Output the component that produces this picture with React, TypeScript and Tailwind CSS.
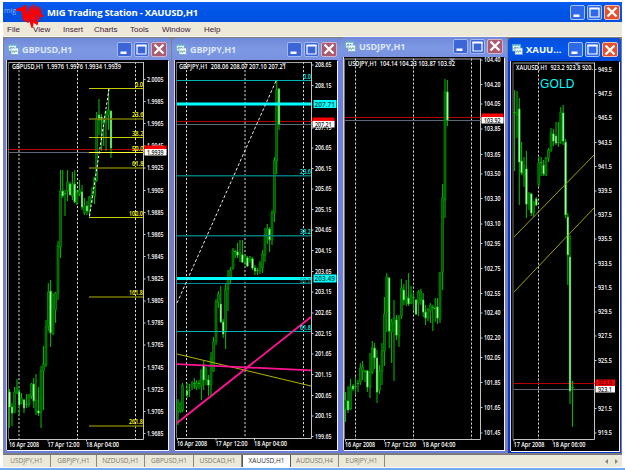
import clsx from "clsx";

// x, high, low, body top, body bottom, kind (u: up, d: down, n: no body)
type Candle = [number, number, number, number, number, "u" | "d" | "n"];
type Line = {
  from: [number, number];
  to: [number, number];
  color: string;
  width?: number;
  dash?: string;
};
type Label = { text: string; x: number; y: number; w: number; color?: string };

type Chart = {
  symbol: string;
  title: string;
  view: [number, number, number, number];
  plot: [number, number, number, number];
  grid: number[];
  header: Label;
  marker: number;
  scale: [string, number][];
  dates: [string, number, number][];
  candles: Candle[];
  lines: Line[];
  labels: Label[];
  ask: number;
  bid: number;
  askText?: string;
  bidText: string;
  tags?: [string, number][];
};

const YELLOW = "#c8c800";
const OLIVE = "#777700";
const TEAL = "#008c8c";
const AQUA = "#00f0f0";

const gbpusd: Chart = {
  symbol: "GBPUSD,H1",
  title: "GBPUSD,H1",
  view: [7, 60, 161, 390],
  plot: [9, 62, 143.5, 439.5],
  grid: [19, 77.5, 135.5],
  header: { text: "GBPUSD,H1  1.9976 1.9976 1.9934 1.9939", x: 12, y: 69, w: 109 },
  marker: 116,
  scale: [
    ["2.0005", 79], ["1.9985", 101], ["1.9965", 123], ["1.9945", 145.5],
    ["1.9925", 167.5], ["1.9905", 190], ["1.9885", 212], ["1.9865", 234],
    ["1.9845", 256], ["1.9825", 278.5], ["1.9805", 300.5], ["1.9785", 322.5],
    ["1.9765", 344.5], ["1.9745", 367], ["1.9725", 389], ["1.9705", 411],
    ["1.9685", 433],
  ],
  dates: [["16 Apr 2008", 9, 30], ["17 Apr 12:00", 47.5, 32], ["18 Apr 04:00", 86, 33]],
  candles: [
    [9.5, 389, 428, 392, 407, "d"], [12, 403, 426, 407, 413, "d"],
    [14.5, 387, 413, 392, 412, "u"], [17, 379, 394, 388, 393, "u"],
    [19.2, 389, 415, 392, 405, "d"], [21.5, 393, 404, 398, 403, "u"],
    [24, 399, 413, 400, 408, "d"], [26.5, 394, 408, 404, 406, "n"],
    [29, 394, 407, 395, 404, "u"], [31.5, 383, 399, 384, 396, "u"],
    [33.7, 378, 408, 384, 401, "d"], [36, 374, 415, 400, 411, "u"],
    [38.5, 387, 416, 411, 413, "d"], [41, 366, 428, 371, 412, "u"],
    [43.5, 346, 410, 364, 371, "u"], [46, 320, 367, 327, 365, "u"],
    [48.3, 283, 331, 292, 326, "u"], [50.6, 280, 347, 291, 333, "d"],
    [53, 293, 335, 295, 334, "u"], [55.5, 292, 323, 293, 310, "u"],
    [58, 241, 300, 246, 293, "u"], [60.5, 170, 258, 191, 247, "u"],
    [62.7, 170, 198, 191, 196, "d"], [65, 190, 216, 193, 195, "n"],
    [67.5, 170, 201, 182, 191, "u"], [70, 182, 195, 184, 195, "d"],
    [72.4, 172, 200, 184, 196, "u"], [74.7, 170, 203, 184, 202, "d"],
    [77, 190, 205, 193, 203, "u"], [79.5, 180, 196, 190, 194, "u"],
    [82, 185, 210, 192, 207, "d"], [84.5, 198, 215, 206, 213, "u"],
    [87, 201, 215, 206, 211, "d"], [89.5, 196, 217, 197, 211, "u"],
    [92, 187, 203, 195, 198, "n"], [94.5, 177, 204, 178, 196, "u"],
    [96.7, 112, 182, 118, 180, "u"], [99, 99, 135, 115, 120, "d"],
    [101.5, 114, 151, 117, 120, "d"], [103.7, 118, 146, 120, 124, "u"],
    [106, 110, 151, 112, 122, "u"], [108.5, 88, 130, 110, 115, "u"],
    [111, 111, 158, 111, 148, "d"],
  ],
  lines: [
    { from: [89, 88.5], to: [143, 88.5], color: YELLOW },
    { from: [89, 119], to: [143, 119], color: OLIVE, width: 1.6 },
    { from: [89, 137.5], to: [143, 137.5], color: YELLOW },
    { from: [89, 152.5], to: [143, 152.5], color: "#ffff30" },
    { from: [89, 168], to: [143, 168], color: OLIVE, width: 1.6 },
    { from: [89, 217.5], to: [143, 217.5], color: YELLOW },
    { from: [89, 297], to: [143, 297], color: OLIVE, width: 1.6 },
    { from: [89, 426], to: [143, 426], color: OLIVE, width: 1.6 },
    { from: [89.5, 216], to: [109, 89], color: "#fff", dash: "2.5 2" },
  ],
  labels: [
    { text: "0.0", x: 135, y: 87, w: 8, color: "#ffff00" },
    { text: "23.6", x: 132, y: 117, w: 11.5, color: "#ffff00" },
    { text: "38.2", x: 132, y: 136, w: 11.5, color: "#e8e800" },
    { text: "50.0", x: 132, y: 151, w: 11.5, color: "#ffff00" },
    { text: "61.8", x: 132, y: 166, w: 11.5, color: "#ffff00" },
    { text: "100.0", x: 129, y: 216, w: 14, color: "#ffff00" },
    { text: "161.8", x: 129, y: 295, w: 14, color: "#ffff00" },
    { text: "261.8", x: 129, y: 424, w: 14, color: "#ffff00" },
  ],
  ask: 149.5,
  bid: 152.5,
  bidText: "1.9939",
};

const gbpjpy: Chart = {
  symbol: "GBPJPY,H1",
  title: "GBPJPY,H1",
  view: [175, 60, 162, 390],
  plot: [177, 62, 311.5, 438.5],
  grid: [186.5, 245, 303.5],
  header: { text: "GBPJPY,H1  208.06 208.07 207.10 207.21", x: 179, y: 69, w: 107 },
  marker: 284,
  scale: [
    ["208.65", 64.5], ["208.15", 85], ["207.15", 127.5], ["206.65", 147.5],
    ["206.15", 168], ["205.65", 188.5], ["205.15", 209], ["204.65", 229.5],
    ["204.15", 250], ["203.65", 271], ["203.15", 291.5], ["202.65", 312.5],
    ["202.15", 333], ["201.65", 353.5], ["201.15", 374], ["200.65", 395],
    ["200.15", 415.5], ["199.65", 436],
  ],
  dates: [["16 Apr 2008", 177, 30], ["17 Apr 12:00", 215.5, 32], ["18 Apr 04:00", 254, 33]],
  candles: [
    [178, 399, 425, 402, 412, "u"], [180.2, 402, 413, 404, 411, "u"],
    [182.5, 383, 412, 385, 410, "u"], [187, 383, 398, 391, 395, "d"],
    [189.5, 384, 397, 390, 394, "n"], [192, 381, 390, 384, 387, "u"],
    [194.3, 378, 389, 383, 385, "n"], [196.6, 380, 390, 383, 387, "u"],
    [199, 380, 389, 383, 386, "n"], [201.4, 377, 400, 370, 386, "u"],
    [203.7, 361, 390, 365, 380, "d"], [206, 367, 385, 369, 380, "u"],
    [208.5, 375, 396, 380, 385, "d"], [211, 352, 395, 358, 385, "u"],
    [213.5, 337, 372, 342, 371, "u"], [216, 299, 345, 302, 341, "u"],
    [218.4, 291, 308, 294, 302, "u"], [220.8, 286, 323, 304, 322, "d"],
    [223.2, 319, 338, 322, 334, "d"], [225.6, 284, 349, 289, 332, "u"],
    [228, 270, 311, 279, 289, "u"], [230.5, 267, 283, 270, 279, "u"],
    [233, 248, 270, 250, 268, "u"], [235.2, 250, 258, 251, 255, "n"],
    [237.5, 243, 258, 252, 255, "d"], [240, 240, 262, 253, 255, "u"],
    [242.4, 240, 263, 255, 262, "d"], [245, 254, 265, 257, 262, "u"],
    [247.4, 256, 267, 258, 266, "d"], [250, 256, 263, 257, 260, "u"],
    [252.5, 257, 270, 259, 268, "d"], [255, 265, 275, 268, 271, "d"],
    [257.5, 268, 275, 270, 272, "n"], [260, 261, 274, 264, 271, "u"],
    [262.6, 250, 273, 254, 268, "u"], [265, 228, 262, 235, 255, "u"],
    [267.3, 224, 244, 229, 237, "u"], [269.6, 227, 252, 229, 240, "d"],
    [272, 210, 245, 213, 240, "u"], [274.4, 157, 222, 161, 213, "u"],
    [276.7, 80, 174, 90, 161, "u"], [279, 88, 130, 89, 124, "d"],
  ],
  lines: [
    { from: [177, 80.5], to: [311, 80.5], color: "#00b4b4" },
    { from: [177, 104], to: [311, 104], color: "#00ffff", width: 3 },
    { from: [177, 175.7], to: [311, 175.7], color: "#007878", width: 1.5 },
    { from: [177, 235.7], to: [311, 235.7], color: "#007878", width: 1.5 },
    { from: [177, 278.5], to: [311, 278.5], color: "#00ffff", width: 3 },
    { from: [177, 283.5], to: [311, 283.5], color: TEAL },
    { from: [177, 331.5], to: [311, 331.5], color: "#00b4b4" },
    { from: [177, 303], to: [276, 81], color: "#e8e8e8", dash: "3 2" },
    { from: [177, 354], to: [311, 386], color: "#b4b400" },
    { from: [177, 364.2], to: [311, 370.3], color: "#ff1493", width: 1.8 },
    { from: [177, 423], to: [311, 317], color: "#ff1493", width: 1.8 },
  ],
  labels: [
    { text: "0.0", x: 303, y: 79, w: 8, color: AQUA },
    { text: "23.6", x: 300, y: 174, w: 11, color: AQUA },
    { text: "38.2", x: 300, y: 234, w: 11, color: AQUA },
    { text: "50.0", x: 300, y: 283, w: 11, color: TEAL },
    { text: "61.8", x: 300, y: 330, w: 11, color: AQUA },
  ],
  ask: 121.5,
  bid: 124.5,
  bidText: "207.21",
  tags: [["207.71", 104], ["203.49", 278.5]],
};

const usdjpy: Chart = {
  symbol: "USDJPY,H1",
  title: "USDJPY,H1",
  view: [344, 57, 160, 393],
  plot: [345, 58.5, 480.5, 439.5],
  grid: [355.5, 413.5, 471.5],
  header: { text: "USDJPY,H1  104.14 104.23 103.87 103.92", x: 348, y: 65.5, w: 107 },
  marker: 452,
  scale: [
    ["104.40", 59.5], ["104.20", 84], ["104.05", 103.5], ["103.85", 128.5],
    ["103.65", 154], ["103.50", 173.5], ["103.30", 198], ["103.10", 223.5],
    ["102.95", 243], ["102.75", 268], ["102.55", 293], ["102.40", 312.5],
    ["102.20", 337.5], ["102.05", 357], ["101.85", 382], ["101.65", 407],
    ["101.45", 432.5],
  ],
  dates: [["16 Apr 2008", 345, 30], ["17 Apr 12:00", 384, 32], ["18 Apr 04:00", 422.5, 33]],
  candles: [
    [345.5, 392, 422, 400, 409, "u"], [348, 386, 413, 401, 410, "d"],
    [350.5, 379, 410, 387, 409, "u"], [353, 384, 391, 386, 389, "d"],
    [355.5, 377, 395, 386, 391, "n"], [358, 380, 392, 383, 385, "n"],
    [360.3, 363, 385, 368, 382, "u"], [362.6, 361, 380, 367, 371, "u"],
    [365, 370, 382, 371, 373, "n"], [367.4, 370, 392, 371, 387, "d"],
    [370, 353, 398, 372, 387, "u"], [372.3, 341, 374, 348, 372, "u"],
    [374.6, 343, 369, 348, 358, "d"], [377, 350, 403, 358, 392, "d"],
    [379.5, 365, 394, 371, 390, "u"], [382, 343, 385, 351, 371, "u"],
    [384.4, 297, 366, 314, 351, "u"], [386.8, 273, 332, 277, 312, "u"],
    [389.2, 277, 348, 278, 331, "d"], [391.6, 319, 363, 322, 332, "u"],
    [394, 300, 381, 318, 324, "u"], [396.5, 315, 340, 320, 335, "d"],
    [399, 315, 347, 318, 336, "u"], [401.4, 279, 319, 288, 316, "u"],
    [403.8, 284, 305, 290, 300, "d"], [406.2, 280, 306, 297, 302, "u"],
    [408.6, 273, 306, 298, 304, "d"], [411, 286, 304, 295, 303, "u"],
    [413.5, 292, 310, 297, 301, "n"], [416, 299, 315, 300, 314, "d"],
    [418.4, 290, 316, 292, 303, "u"], [420.8, 289, 305, 291, 300, "u"],
    [423.2, 293, 317, 300, 312, "d"], [425.6, 305, 325, 312, 318, "d"],
    [428, 308, 321, 309, 318, "u"], [430.4, 303, 323, 305, 311, "u"],
    [432.8, 305, 331, 307, 310, "n"], [435.2, 298, 322, 308, 310, "n"],
    [437.5, 298, 324, 307, 318, "d"], [440, 272, 323, 273, 319, "u"],
    [442.6, 184, 290, 198, 272, "u"], [445, 79, 218, 92, 200, "u"],
    [447.4, 80, 126, 92, 120, "d"],
  ],
  lines: [],
  labels: [],
  ask: 117.5,
  bid: 120.5,
  bidText: "103.92",
};

const xauusd: Chart = {
  symbol: "XAUUSD,H1",
  title: "XAUU...",
  view: [510, 61, 108, 390],
  plot: [512.5, 62.5, 593.5, 439.5],
  grid: [537.5],
  header: { text: "XAUUSD,H1  923.2 923.8 920.", x: 515, y: 70, w: 77 },
  marker: 576,
  scale: [
    ["949.5", 69], ["947.5", 93], ["945.5", 117.5], ["943.5", 142],
    ["941.5", 166], ["939.5", 190.5], ["937.5", 214.5], ["935.5", 238.5],
    ["933.5", 263], ["931.5", 287], ["929.5", 311.5], ["927.5", 335.5],
    ["925.5", 360], ["921.5", 408], ["919.5", 432.5],
  ],
  dates: [["17 Apr 2008", 512.5, 31], ["18 Apr 06:00", 551.5, 33]],
  candles: [
    [513.5, 90, 171, 112, 115, "n"], [516, 91, 138, 112, 115, "u"],
    [518.3, 98, 205, 109, 162, "d"], [520.6, 142, 175, 161, 173, "d"],
    [523, 157, 187, 166, 176, "u"], [525.4, 151, 218, 169, 204, "d"],
    [528, 192, 210, 194, 204, "u"], [530.3, 193, 216, 194, 213, "d"],
    [532.7, 201, 217, 202, 213, "u"], [535.3, 197, 206, 199, 205, "d"],
    [537.8, 156, 187, 163, 184, "u"], [540.2, 157, 176, 162, 167, "n"],
    [542.6, 160, 176, 165, 174, "d"], [545, 157, 176, 158, 175, "u"],
    [547.5, 148, 162, 150, 158, "u"], [550, 128, 152, 133, 150, "u"],
    [552.4, 129, 146, 134, 141, "d"], [555, 122, 145, 136, 143, "d"],
    [557.4, 122, 147, 142, 144, "n"], [559.8, 107, 144, 112, 141, "u"],
    [562.2, 105, 145, 113, 141, "d"], [564.6, 139, 218, 142, 215, "d"],
    [566.8, 213, 285, 217, 255, "d"], [569, 235, 404, 257, 391, "d"],
    [571.5, 381, 427, 387, 389, "n"],
  ],
  lines: [
    { from: [513, 237], to: [593, 155], color: "#a0a000" },
    { from: [513, 292], to: [593, 208], color: "#a0a000" },
  ],
  labels: [],
  ask: 383.5,
  bid: 389.5,
  askText: "923.6",
  bidText: "923.1",
};

const menu = [
  { name: "File", width: "w-[26px]" },
  { name: "View", width: "w-[30px]" },
  { name: "Insert", width: "w-[31px]" },
  { name: "Charts", width: "w-[36px]" },
  { name: "Tools", width: "w-[32px]" },
  { name: "Window", width: "w-[42px]" },
  { name: "Help", width: "w-[30px]" },
];

const tabs = [
  { name: "USDJPY,H1", width: "w-[48px]" },
  { name: "GBPJPY,H1", width: "w-[46px]" },
  { name: "NZDUSD,H1", width: "w-[48px]" },
  { name: "GBPUSD,H1", width: "w-[49px]" },
  { name: "USDCAD,H1", width: "w-[48px]" },
  { name: "XAUUSD,H1", width: "w-[49px]", active: true },
  { name: "AUDUSD,H4", width: "w-[48px]" },
  { name: "EURJPY,H1", width: "w-[46px]" },
];

function ChartText({ text, x, y, w, color = "#fff" }: Label) {
  return (
    <text
      x={x}
      y={y}
      fill={color}
      textLength={w}
      lengthAdjust="spacingAndGlyphs"
      className="whitespace-pre font-['Open_Sans',sans-serif] text-[6.5px] font-semibold"
    >
      {text}
    </text>
  );
}

function Candles({ data }: { data: Candle[] }) {
  return (
    <>
      {data.map(([x, high, low, top, bottom, kind]) => (
        <g key={x}>
          <rect x={x - 0.55} y={high} width="1.1" height={low - high} fill="#00b400" />
          {kind === "u" && (
            <rect
              x={x - 1}
              y={top}
              width="2"
              height={bottom - top}
              fill="#005a00"
              stroke="#00a000"
              strokeWidth="0.6"
            />
          )}
          {kind === "d" && (
            <rect
              x={x - 0.8}
              y={top}
              width="1.6"
              height={bottom - top}
              fill="#a8ffa8"
              stroke="#30e030"
              strokeWidth="0.5"
            />
          )}
          {kind === "n" && (
            <rect x={x - 1.2} y={top} width="2.4" height="1" fill="#00c000" />
          )}
        </g>
      ))}
    </>
  );
}

function ChartView({ chart }: { chart: Chart }) {
  const [vx, vy, vw, vh] = chart.view;
  const [left, top, right, bottom] = chart.plot;
  const edge = vx + vw;
  const labelWidth = chart.symbol === "XAUUSD,H1" ? 14.5 : 17;
  return (
    <svg width={vw} height={vh} viewBox={`${vx} ${vy} ${vw} ${vh}`} className="block bg-black">
      {chart.grid.map((x) => (
        <line
          key={x}
          x1={x}
          x2={x}
          y1={top}
          y2={bottom}
          stroke="#d8d8d8"
          strokeDasharray="2.2 1.8"
        />
      ))}
      <path d={`M${left} ${top + 0.5}H${right}`} stroke="#a8a8a8" />
      <path d={`M${left - 0.5} ${top}V${bottom}`} stroke="#707070" />
      <path d={`M${right} ${top}V${bottom}H${left}`} fill="none" stroke="#c4c4c4" />
      <path d={`M${chart.marker - 3} ${top}h6l-3 3.5z`} fill="#8898b0" />
      <path d={`M${left} ${chart.bid}H${right}`} stroke="#5c6878" />
      <path d={`M${left} ${chart.ask}H${right}`} stroke="#b80000" />
      <Candles data={chart.candles} />
      {chart.lines.map((l, i) => (
        <line
          key={i}
          x1={l.from[0]}
          y1={l.from[1]}
          x2={l.to[0]}
          y2={l.to[1]}
          stroke={l.color}
          strokeWidth={l.width ?? 1}
          strokeDasharray={l.dash}
        />
      ))}
      {chart.labels.map((l) => (
        <ChartText key={l.text} {...l} />
      ))}
      <ChartText {...chart.header} />
      {chart.scale.map(([text, y]) => (
        <g key={text}>
          <path d={`M${right} ${y + 0.5}h2`} stroke="#c4c4c4" />
          <ChartText text={text} x={right + 3.5} y={y + 2.5} w={labelWidth - 0.5} />
        </g>
      ))}
      {chart.dates.map(([text, x, w]) => (
        <g key={text}>
          <path d={`M${x + 0.5} ${bottom}v2`} stroke="#c4c4c4" />
          <ChartText text={text} x={x} y={bottom + 7.5} w={w} />
        </g>
      ))}
      {chart.tags?.map(([text, y]) => (
        <g key={text}>
          <rect x={right + 2} y={y - 4} width={edge - right - 2.5} height="8" fill="#00ffff" />
          <ChartText text={text} x={right + 3} y={y + 2.7} w={20.5} color="#003838" />
        </g>
      ))}
      <rect
        x={right + 1}
        y={chart.ask - 4}
        width={labelWidth + 5}
        height="7"
        fill="#ff0000"
      />
      {chart.askText && (
        <ChartText text={chart.askText} x={right + 3.5} y={chart.ask + 1.7} w={14} color="#500000" />
      )}
      <rect x={right + 1} y={chart.bid - 3.5} width={labelWidth + 5} height="6.5" fill="#fff" />
      <ChartText
        text={chart.bidText}
        x={right + 3.5}
        y={chart.bid + 2}
        w={labelWidth - 0.5}
        color="#202020"
      />
      {chart.symbol === "XAUUSD,H1" && (
        <text
          x="539"
          y="87.5"
          fill="#00ffff"
          textLength="34.5"
          className="font-['Liberation_Sans',sans-serif] text-[12px]"
        >
          GOLD
        </text>
      )}
    </svg>
  );
}

function WindowButtons({ active }: { active?: boolean }) {
  const base = "flex h-[15px] items-center justify-center rounded-[2px] border";
  const blue = active ? "border-[#a9c4fb] bg-[#2f68e8]" : "border-[#a3b8f0] bg-[#3c66d8]";
  return (
    <div className="flex shrink-0 gap-[2px]">
      <div className={clsx(base, blue, "w-[15px]")}>
        <svg width="11" height="11">
          <rect x="1.5" y="7.5" width="6" height="2.5" fill="#fff" />
        </svg>
      </div>
      <div className={clsx(base, blue, "w-[15px]")}>
        <svg width="11" height="11">
          <path d="M1 1.5h9V10H1z" fill="none" stroke="#fff" strokeWidth="1.2" />
          <path d="M.5 1.5h10" stroke="#fff" strokeWidth="2" />
        </svg>
      </div>
      <div
        className={clsx(
          base,
          "w-[16px]",
          active ? "border-[#f3c0b0] bg-[#e4512c]" : "border-[#d3b2c4] bg-[#ac5a70]",
        )}
      >
        <svg width="12" height="12">
          <path d="m1.5 1.5 9 9m0-9-9 9" stroke="#fff" strokeWidth="2.3" />
        </svg>
      </div>
    </div>
  );
}

function ChartIcon() {
  return (
    <svg width="11" height="11" viewBox="0 0 11 11" className="shrink-0">
      <rect x=".5" y=".5" width="8" height="6.5" fill="#e8fbfb" stroke="#5fa3b8" strokeWidth=".7" />
      <path d="M1 1.2h7" stroke="#4fa8c8" />
      <path d="m1.5 5 1.5-2 1.5 1.5L6 3" fill="none" stroke="#4c8c84" strokeWidth=".8" />
      <rect x="3" y="4" width="7.5" height="6.5" fill="#f2ffff" stroke="#6d9cc4" strokeWidth=".7" />
      <path d="m4 8.8 1.3-2.2 1.2 2L8 6.4l1.3 2" fill="none" stroke="#4c8c84" strokeWidth=".8" />
    </svg>
  );
}

function ChartWindow({
  chart,
  active,
  className,
  bar,
}: {
  chart: Chart;
  active?: boolean;
  className: string;
  bar: string;
}) {
  return (
    <section
      className={clsx(
        "flex shrink-0 flex-col rounded-t-[4px]",
        active ? "bg-[#0a35d0]" : "bg-[#6c7ddc]",
        className,
      )}
    >
      <header
        className={clsx(
          "flex shrink-0 items-center rounded-t-[4px] pl-1",
          active
            ? "bg-linear-to-b from-[#0a50d8] via-[#0058ee] to-[#0048d8]"
            : "bg-linear-to-b from-[#7088d8] via-[#7c98e4] to-[#7a92e0]",
          bar,
        )}
      >
        <ChartIcon />
        <h2
          className={clsx(
            "ml-[3px] grow whitespace-nowrap font-['Open_Sans',sans-serif] font-bold leading-none",
            active ? "text-[9.5px] text-white" : "text-[9px] tracking-[-0.1px] text-[#dde6fb]",
          )}
        >
          {chart.title}
        </h2>
        <WindowButtons active={active} />
      </header>
      <div className="ml-[2px] w-fit border-l border-[#d8d4c4] shadow-[1px_1px_0_#f4f4f4]">
        <ChartView chart={chart} />
      </div>
    </section>
  );
}

export default function App() {
  return (
    <div className="flex h-[470px] w-[625px] flex-col overflow-hidden bg-white pl-[3px] pr-[3px] pt-[2px]">
      <div className="relative flex h-5 shrink-0 items-center bg-linear-to-b from-[#0a5cf0] via-[#0055e6] to-[#0050e0] pr-[2px]">
        <span className="w-[44px] pb-[3px] pl-px font-['Open_Sans',sans-serif] text-[7px] leading-none text-[#8ab4f4]">
          mig
        </span>
        <h1 className="grow pt-px font-['Open_Sans',sans-serif] text-[9.5px] font-bold leading-none tracking-[-0.2px] text-white">
          MIG Trading Station - XAUUSD,H1
        </h1>
        <WindowButtons active />
        <svg width="30" height="28" className="absolute left-[13px] top-0">
          <path
            d="M1 8h5l2 10 2-14 1 14 3-11 1 15 3-19 1 16 2-14 2 12 1-11 1 8h2M2 7l5-1 3 13M8 4l4 16 3-15 3 12 3-8M15 17l1 8 1-6 4 3 1-6"
            fill="none"
            stroke="#ff0000"
            strokeWidth="1.8"
            strokeLinejoin="round"
            strokeLinecap="round"
          />
        </svg>
      </div>
      <nav className="flex h-[14px] shrink-0 items-center bg-[#ece9d8] pl-1 pt-px font-['Liberation_Sans',sans-serif] text-[8px] leading-none text-[#402038]">
        {menu.map((m) => (
          <span key={m.name} className={m.width}>
            {m.name}
          </span>
        ))}
      </nav>
      <main className="flex h-[418px] shrink-0 items-end border-t border-[#f8f6ee] bg-[#808080] pb-px">
        <ChartWindow chart={gbpusd} className="ml-px h-[415px] w-[167px]" bar="h-[22px] pr-1" />
        <ChartWindow chart={gbpjpy} className="ml-px h-[415px] w-[169px]" bar="h-[22px] pr-1" />
        <ChartWindow chart={usdjpy} className="h-[416px] w-[166px]" bar="h-[20px] pb-[2px] pr-1" />
        <ChartWindow
          chart={xauusd}
          active
          className="ml-px h-[415px] w-[113px]"
          bar="h-[23px] pr-[3px]"
        />
      </main>
      <footer className="flex h-[14px] shrink-0 items-stretch border-b border-t border-b-white border-t-[#777] bg-[#ece9d8] font-['Open_Sans',sans-serif] text-[6.5px] leading-none text-[#7c7a70]">
        {tabs.map((t) => (
          <span
            key={t.name}
            className={clsx(
              "flex items-center justify-center",
              t.width,
              t.active
                ? "border-x border-[#555] bg-white text-[#303030]"
                : "border-r border-[#8c8a80]",
            )}
          >
            {t.name}
          </span>
        ))}
        <span className="ml-auto flex items-center gap-[7px] pr-1">
          <svg width="3" height="5">
            <path d="M3 0v5L0 2.5z" fill="#888" />
          </svg>
          <svg width="3" height="5">
            <path d="M0 0v5l3-2.5z" fill="#888" />
          </svg>
        </span>
      </footer>
      <div className="-mx-[3px] h-[2px] shrink-0 bg-[#72aaf0]" />
    </div>
  );
}
